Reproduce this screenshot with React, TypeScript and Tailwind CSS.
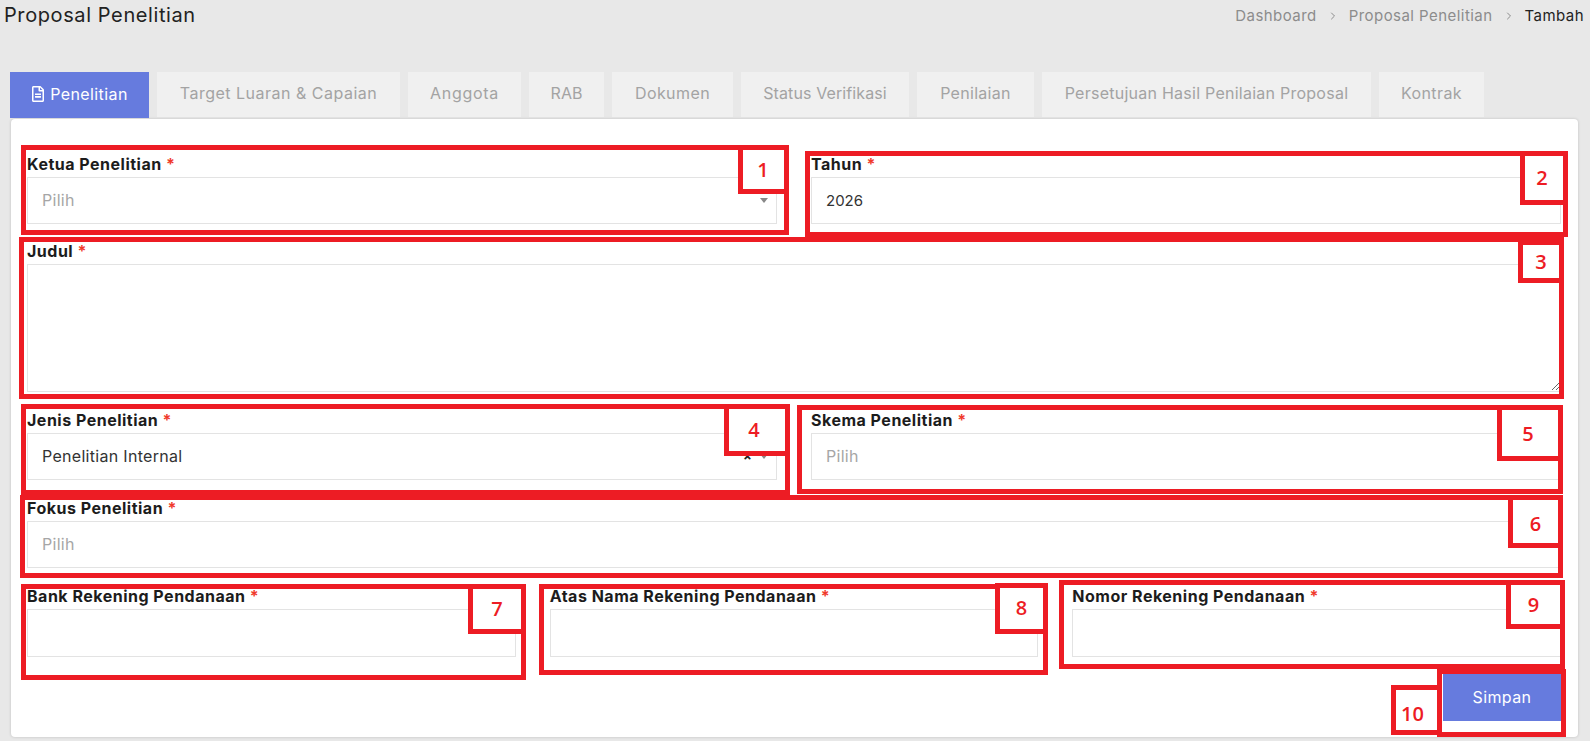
import { FaRegFileAlt } from "react-icons/fa";
import { LuChevronRight } from "react-icons/lu";

const tabs = [
  { label: "Target Luaran & Capaian", w: "w-[243px] tracking-[0.5px]" },
  { label: "Anggota", w: "w-[113px] tracking-[0.7px]" },
  { label: "RAB", w: "w-[75px] tracking-[0px]" },
  { label: "Dokumen", w: "w-[121px] tracking-[0.4px]" },
  { label: "Status Verifikasi", w: "w-[168px] tracking-[0.1px]" },
  { label: "Penilaian", w: "w-[117px] tracking-[0.3px]" },
  { label: "Persetujuan Hasil Penilaian Proposal", w: "w-[329px] tracking-[0.25px]" },
  { label: "Kontrak", w: "w-[105px] tracking-[0.4px]" },
];

const marks = [
  { n: "1", num: "pr-[1px]", box: "left-[21px] top-[145px] w-[768px] h-[90px]", tag: "left-[738px] top-[145px] w-[51px] h-[49px]" },
  { n: "2", num: "pr-[4px]", box: "left-[805px] top-[151px] w-[763px] h-[86px]", tag: "left-[1520px] top-[151px] w-[48px] h-[54px]" },
  { n: "3", num: "pr-0", box: "left-[19px] top-[237px] w-[1545px] h-[162px]", tag: "left-[1518px] top-[240px] w-[46px] h-[43px]" },
  { n: "4", num: "pr-[6px]", box: "left-[21px] top-[404px] w-[769px] h-[91px]", tag: "left-[724px] top-[404px] w-[66px] h-[52px]" },
  { n: "5", num: "pt-[2px] pr-[4px]", box: "left-[797px] top-[405px] w-[766px] h-[89px]", tag: "left-[1497px] top-[405px] w-[66px] h-[56px]" },
  { n: "6", num: "pt-[4px]", box: "left-[20px] top-[495px] w-[1543px] h-[83px]", tag: "left-[1508px] top-[495px] w-[55px] h-[53px]" },
  { n: "7", num: "pr-0", box: "left-[21px] top-[584px] w-[505px] h-[96px]", tag: "left-[468px] top-[584px] w-[58px] h-[50px]" },
  { n: "8", num: "pb-[2px]", box: "left-[539px] top-[584px] w-[509px] h-[91px]", tag: "left-[995px] top-[583px] w-[53px] h-[51px]" },
  { n: "9", num: "pr-[4px]", box: "left-[1059px] top-[580px] w-[506px] h-[89px]", tag: "left-[1506px] top-[580px] w-[59px] h-[49px]" },
  { n: "10", num: "pt-[8px] pr-[8px]", box: "left-[1437px] top-[669px] w-[129px] h-[68px]", tag: "left-[1391px] top-[685px] w-[51px] h-[50px]" },
];

function Label({ text }: { text: string }) {
  return (
    <label className="block h-[24px] leading-[23px] text-[16px] font-bold text-[#1c1c1c] tracking-[0.5px]">
      {text} <span className="text-[#f0392b]">*</span>
    </label>
  );
}

function Arrow() {
  return <span className="w-0 h-0 border-x-[4px] border-x-transparent border-t-[5px] border-t-[#888888]" />;
}

function Select({ value, clear }: { value?: string; clear?: boolean }) {
  return (
    <div className="h-[47px] border border-[#e3e3e3] bg-white pl-[14px] pr-[8px] flex items-center justify-between text-[16px] tracking-[0.3px]">
      <span className={value ? "text-[#333333] pb-[1px]" : "text-[#a6a6a6] pb-[1px]"}>{value ?? "Pilih"}</span>
      <span className="flex items-center gap-[8px]">
        {clear && <span className="text-[#222222] font-bold text-[13px] leading-none">×</span>}
        <Arrow />
      </span>
    </div>
  );
}

function TextInput({ value, className = "h-[47px]" }: { value?: string; className?: string }) {
  return (
    <input
      readOnly
      value={value ?? ""}
      className={`block w-full border border-[#e3e3e3] bg-white px-[14px] text-[15px] text-[#333333] outline-none ${className}`}
    />
  );
}

export default function App() {
  return (
    <div className="relative w-[1590px] h-[741px] overflow-hidden bg-[#e8e8e8] font-['Inter',sans-serif]">
      <header className="h-[72px] pl-[4px] pr-[6px] flex justify-between items-start">
        <h1 className="text-[20px] leading-[30px] text-[#222222] font-normal tracking-[0.6px]">Proposal Penelitian</h1>
        <nav className="flex items-center h-[32px] text-[15px] tracking-[0.45px] text-[#8c8c8c]">
          <span>Dashboard</span>
          <LuChevronRight className="mx-[10px] w-[12px] h-[12px]" />
          <span>Proposal Penelitian</span>
          <LuChevronRight className="mx-[10px] w-[12px] h-[12px]" />
          <span className="text-[#222222]">Tambah</span>
        </nav>
      </header>

      <div className="ml-[10px] flex gap-[8px] h-[46px] items-start">
        <div className="w-[139px] h-[46px] pb-[2px] bg-[#667bde] text-white text-[16px] tracking-[0.4px] flex items-center justify-center gap-[5px]">
          <FaRegFileAlt className="w-[14px] h-[16px]" />
          <span>Penelitian</span>
        </div>
        {tabs.map((t) => (
          <div
            key={t.label}
            className={`${t.w} h-[45px] pb-[3px] bg-[#f0f0f0] text-[#a3a3a3] text-[16px] flex items-center justify-center`}
          >
            {t.label}
          </div>
        ))}
      </div>

      <main className="ml-[11px] mr-[12px] mt-[1px] h-[618px] bg-white rounded-[4px] shadow-[0_0_3px_rgba(0,0,0,0.18)] pt-[34px] pl-[16px] pr-[17px]">
        <div className="flex gap-[34px]">
          <div className="flex-1">
            <Label text="Ketua Penelitian" />
            <Select />
          </div>
          <div className="flex-1">
            <Label text="Tahun" />
            <TextInput value="2026" />
          </div>
        </div>

        <div className="mt-[16px]">
          <Label text="Judul" />
          <textarea
            readOnly
            className="block w-full h-[128px] border border-[#e3e3e3] bg-white outline-none resize-y"
          />
        </div>

        <div className="mt-[17px] flex gap-[34px]">
          <div className="flex-1">
            <Label text="Jenis Penelitian" />
            <Select value="Penelitian Internal" clear />
          </div>
          <div className="flex-1">
            <Label text="Skema Penelitian" />
            <Select />
          </div>
        </div>

        <div className="mt-[17px]">
          <Label text="Fokus Penelitian" />
          <Select />
        </div>

        <div className="mt-[17px] flex gap-[34px]">
          <div className="flex-1">
            <Label text="Bank Rekening Pendanaan" />
            <TextInput className="h-[48px]" />
          </div>
          <div className="flex-1">
            <Label text="Atas Nama Rekening Pendanaan" />
            <TextInput className="h-[48px]" />
          </div>
          <div className="flex-1">
            <Label text="Nomor Rekening Pendanaan" />
            <TextInput className="h-[48px]" />
          </div>
        </div>

        <div className="mt-[17px] flex justify-end">
          <button className="w-[118px] h-[47px] pb-[2px] bg-[#667bde] text-white text-[16px] tracking-[0.4px]">Simpan</button>
        </div>
      </main>

      {marks.map((m) => (
        <div key={m.n}>
          <div className={`absolute border-[5px] border-[#ed1c24] ${m.box}`} />
          <div
            className={`absolute border-[5px] border-[#ed1c24] bg-white flex items-center justify-center text-[#ed1c24] text-[20px] font-semibold font-['Open_Sans',sans-serif] ${m.tag} ${m.num}`}
          >
            {m.n}
          </div>
        </div>
      ))}
    </div>
  );
}
